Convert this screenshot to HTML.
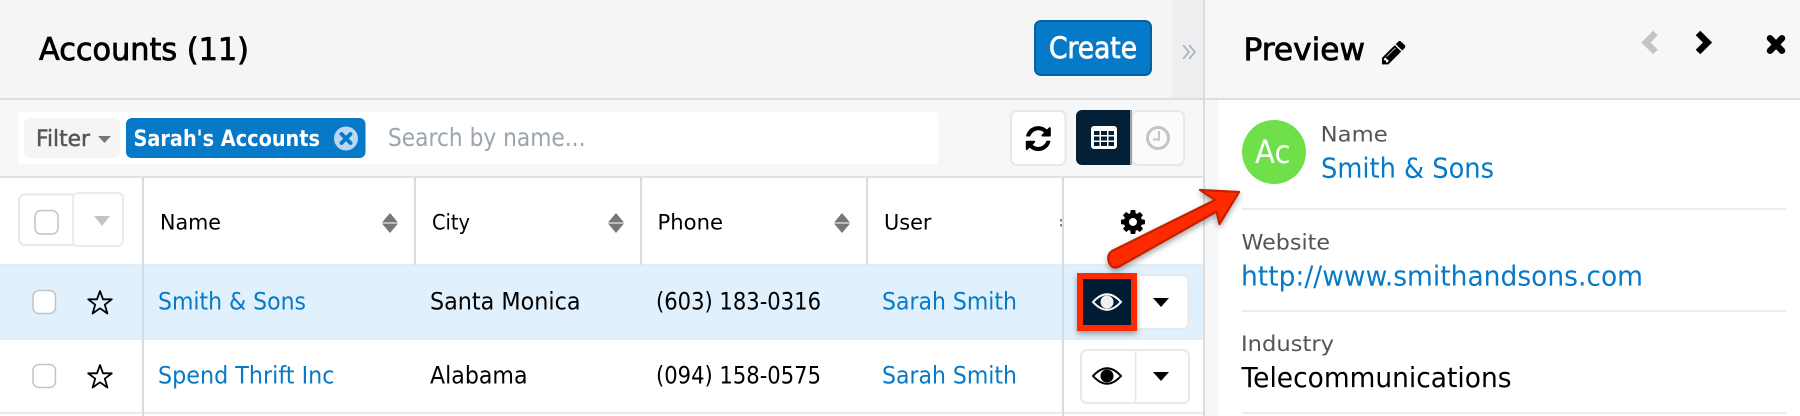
<!DOCTYPE html>
<html><head><meta charset="utf-8"><title>Accounts</title>
<style>
html,body{margin:0;padding:0;background:#fff;width:1800px;height:416px;overflow:hidden}
svg{display:block}
text{font-family:"DejaVu Sans","Liberation Sans",sans-serif;white-space:pre}
.semi{stroke-width:.8px}
</style></head><body>
<svg xmlns="http://www.w3.org/2000/svg" width="1800" height="416" viewBox="0 0 1800 416">
<defs>
<filter id="sh" x="-30%" y="-30%" width="160%" height="170%"><feDropShadow dx="0" dy="3" stdDeviation="3" flood-color="#000" flood-opacity=".35"/></filter>
</defs>
<rect width="1800" height="416" fill="#fff"/>
<!-- main header -->
<rect x="0" y="0" width="1172" height="98" fill="#f5f5f5"/>
<rect x="1172" y="0" width="31" height="98" fill="#eeeff1"/>
<rect x="0" y="98" width="1204" height="2" fill="#dedede"/>
<text x="39" y="60" font-size="31" fill="#000" stroke="#000" class="semi" textLength="210" lengthAdjust="spacingAndGlyphs">Accounts (11)</text>
<rect x="1035" y="21" width="116" height="54" rx="6" fill="#0679c8" stroke="#05609f" stroke-width="2"/>
<text x="1049" y="58" font-size="29" fill="#fff" stroke="#fff" class="semi" textLength="88" lengthAdjust="spacingAndGlyphs">Create</text>
<path d="M1183 45l6 7-6 7M1189 45l6 7-6 7" fill="none" stroke="#aeb5bc" stroke-width="1.800"/>
<!-- filter bar -->
<rect x="0" y="100" width="1203" height="76" fill="#f6f7f9"/>
<rect x="0" y="176" width="1203" height="2" fill="#e0e2e4"/>
<rect x="18" y="112" width="920" height="52" rx="3" fill="#fff"/>
<rect x="24" y="118" width="96" height="40" rx="6" fill="#f5f5f5"/>
<text x="36" y="146" font-size="22.500" fill="#555" stroke="#555" stroke-width=".5" textLength="54" lengthAdjust="spacingAndGlyphs">Filter</text>
<path d="M98 136h13l-6.500 7z" fill="#777"/>
<rect x="126" y="118" width="239.500" height="40" rx="6" fill="#0679c8"/>
<text x="133.500" y="146" font-size="22.500" font-weight="bold" fill="#fff" textLength="186.500" lengthAdjust="spacingAndGlyphs">Sarah's Accounts</text>
<circle cx="346" cy="138.500" r="12" fill="#b9d7f0"/>
<path d="M341.500 134l9 9M350.500 134l-9 9" stroke="#0679c8" stroke-width="3.800" stroke-linecap="round"/>
<text x="388" y="146" font-size="25" fill="#9aa5ae" textLength="197.500" lengthAdjust="spacingAndGlyphs">Search by name...</text>
<!-- refresh -->
<rect x="1011" y="111" width="54.500" height="54" rx="6" fill="#fff" stroke="#e6e8ea" stroke-width="2"/>
<g transform="translate(1023.700,124) scale(.0163)"><path d="M1639 1056q0 5-1 7-64 268-268 434.500t-478 166.500q-146 0-282.500-55t-243.500-157l-129 129q-19 19-45 19t-45-19-19-45v-448q0-26 19-45t45-19h448q26 0 45 19t19 45-19 45l-137 137q71 66 161 102t187 36q134 0 250-65t186-179q11-17 53-117 8-23 30-23h192q13 0 22.500 9.500t9.500 22.500zm25-800v448q0 26-19 45t-45 19h-448q-26 0-45-19t-19-45 19-45l138-138q-148-137-349-137-134 0-250 65t-186 179q-11 17-53 117-8 23-30 23h-199q-13 0-22.500-9.500t-9.500-22.500v-7q65-268 270-434.500t480-166.500q146 0 284 55.500t245 156.500l130-129q19-19 45-19t45 19 19 45z" fill="#000"/></g>
<!-- view toggle -->
<rect x="1132" y="111" width="52" height="54" rx="6" fill="#fbfbfc" stroke="#e6e8ea" stroke-width="2"/>
<path d="M1082 110h48v55h-48a6 6 0 0 1-6-6v-43a6 6 0 0 1 6-6z" fill="#021f36"/>
<rect x="1130" y="110" width="2" height="55" fill="#9aa3ab"/>
<rect x="1091" y="126" width="26" height="23" rx="3" fill="#fff"/>
<path d="M1094 131h5.500v4h-5.500zM1101 131h6v4h-6zM1108.500 131h5.500v4h-5.500zM1094 136.500h5.500v4h-5.500zM1101 136.500h6v4h-6zM1108.500 136.500h5.500v4h-5.500zM1094 142h5.500v4h-5.500zM1101 142h6v4h-6zM1108.500 142h5.500v4h-5.500z" fill="#021f36"/>
<circle cx="1158" cy="138" r="10.500" fill="none" stroke="#c4c4c4" stroke-width="3"/>
<path d="M1159 131v8.500h-6" fill="none" stroke="#c4c4c4" stroke-width="2"/>
<!-- table rows -->
<rect x="0" y="264" width="1203" height="2" fill="#e8ebee"/>
<rect x="0" y="266" width="1203" height="72" fill="#e0f0fd"/>
<rect x="0" y="338" width="1203" height="2" fill="#e8ebee"/>
<rect x="0" y="412" width="1203" height="2" fill="#e8ebee"/>
<!-- column lines -->
<rect x="142" y="178" width="2" height="238" fill="#d6dce2"/>
<rect x="414" y="178" width="2" height="87" fill="#d6dce2"/>
<rect x="640" y="178" width="2" height="87" fill="#d6dce2"/>
<rect x="866" y="178" width="2" height="87" fill="#d6dce2"/>
<rect x="1062" y="178" width="2" height="238" fill="#d6dce2"/>
<!-- header checkbox -->
<path d="M73 194.500H25a6 6 0 0 0-6 6V239a6 6 0 0 0 6 6h48" fill="#fff" stroke="#e8e8e8" stroke-width="2"/>
<rect x="73" y="193" width="50" height="53" rx="5" fill="#fff" stroke="#ebebeb" stroke-width="2"/>
<rect x="35" y="210.500" width="23" height="23.500" rx="6" fill="#fff" stroke="#c4c4c4" stroke-width="1.500"/>
<path d="M94 216h16l-8 10z" fill="#c4c4c4"/>
<!-- header text -->
<text x="160" y="229.500" font-size="21.500" fill="#000" textLength="61" lengthAdjust="spacingAndGlyphs">Name</text>
<text x="432" y="229.500" font-size="21.500" fill="#000" textLength="38" lengthAdjust="spacingAndGlyphs">City</text>
<text x="657.500" y="229.500" font-size="21.500" fill="#000" textLength="65.500" lengthAdjust="spacingAndGlyphs">Phone</text>
<text x="884" y="229.500" font-size="21.500" fill="#000" textLength="47.500" lengthAdjust="spacingAndGlyphs">User</text>
<path d="M390 213l8 9.500h-16zM390 233l8-9.500h-16z" fill="#777"/>
<path d="M616 213l8 9.500h-16zM616 233l8-9.500h-16z" fill="#777"/>
<path d="M842 213l8 9.500h-16zM842 233l8-9.500h-16z" fill="#777"/>
<path d="M1060 219h2v2.500h-2zM1060 224h2v2.500h-2z" fill="#888"/>
<g transform="translate(1119,208) scale(.0156)"><path fill-rule="evenodd" d="M1152 896q0-106-75-181t-181-75-181 75-75 181 75 181 181 75 181-75 75-181zm512-109v222q0 12-8 23t-20 13l-185 28q-19 54-39 91 35 50 107 138 10 12 10 25t-9 23q-27 37-99 108t-94 71q-12 0-26-9l-138-108q-44 23-91 38-16 136-29 186-7 28-36 28h-222q-14 0-24.500-8.500t-11.500-21.500l-28-184q-49-16-90-37l-141 107q-10 9-25 9-14 0-25-11-126-114-165-168-7-10-7-23 0-12 8-23 15-21 51-66.500t54-70.500q-27-50-41-99l-183-27q-13-2-21-12.500t-8-23.500v-222q0-12 8-23t19-13l186-28q14-46 39-92-40-57-107-138-10-12-10-24 0-10 9-23 26-36 98.500-107.500t94.500-71.500q13 0 26 10l138 107q44-23 91-38 16-136 29-186 7-28 36-28h222q14 0 24.500 8.500t11.500 21.500l28 184q49 16 90 37l142-107q9-9 24-9 13 0 25 10 129 119 165 170 7 8 7 22 0 12-8 23-15 21-51 66.500t-54 70.500q26 50 41 98l183 28q13 2 21 12.500t8 23.500z" fill="#000"/></g>
<!-- row 1 -->
<rect x="33" y="290.500" width="22.500" height="23" rx="6" fill="#fff" stroke="#c4c4c4" stroke-width="1.500"/>
<path d="M100 291l3 8.300h8.800l-7 5.400 2.600 8.800-7.400-5.200-7.400 5.200 2.600-8.800-7-5.400h8.800z" fill="none" stroke="#000" stroke-width="1.800" stroke-linejoin="round"/>
<text x="158" y="309.500" font-size="24" fill="#0679c8" textLength="148" lengthAdjust="spacingAndGlyphs">Smith &amp; Sons</text>
<text x="430" y="309.500" font-size="24" fill="#000" textLength="150.500" lengthAdjust="spacingAndGlyphs">Santa Monica</text>
<text x="656" y="309.500" font-size="24" fill="#000" textLength="165" lengthAdjust="spacingAndGlyphs">(603) 183-0316</text>
<text x="882" y="309.500" font-size="24" fill="#0679c8" textLength="135" lengthAdjust="spacingAndGlyphs">Sarah Smith</text>
<rect x="1120" y="275" width="68.500" height="54" rx="6" fill="#fff" stroke="#e8e8e8" stroke-width="2"/>
<rect x="1080" y="276" width="54" height="52" fill="#021f36" stroke="#ff2a00" stroke-width="6" filter="url(#sh)"/>
<path d="M1093 302q14-15.500 28 0q-14 15.500-28 0z" fill="none" stroke="#fff" stroke-width="2"/>
<circle cx="1107" cy="302" r="6.500" fill="#f1f1f1"/>
<path d="M1153 298h16l-8 9z" fill="#000"/>
<!-- row 2 -->
<rect x="33" y="364.500" width="22.500" height="23" rx="6" fill="#fff" stroke="#c4c4c4" stroke-width="1.500"/>
<path d="M100 365l3 8.300h8.800l-7 5.400 2.600 8.800-7.400-5.200-7.400 5.200 2.600-8.800-7-5.400h8.800z" fill="none" stroke="#000" stroke-width="1.800" stroke-linejoin="round"/>
<text x="158" y="383.500" font-size="24" fill="#0679c8" textLength="176.500" lengthAdjust="spacingAndGlyphs">Spend Thrift Inc</text>
<text x="430" y="383.500" font-size="24" fill="#000" textLength="97.500" lengthAdjust="spacingAndGlyphs">Alabama</text>
<text x="656" y="383.500" font-size="24" fill="#000" textLength="165" lengthAdjust="spacingAndGlyphs">(094) 158-0575</text>
<text x="882" y="383.500" font-size="24" fill="#0679c8" textLength="135" lengthAdjust="spacingAndGlyphs">Sarah Smith</text>
<rect x="1081" y="350" width="108" height="53" rx="6" fill="#fff" stroke="#e8e8e8" stroke-width="2"/>
<rect x="1135" y="350" width="1.500" height="53" fill="#e8e8e8"/>
<path d="M1093 376q14-15.500 28 0q-14 15.500-28 0z" fill="none" stroke="#000" stroke-width="2"/>
<circle cx="1107" cy="376" r="6.500" fill="#000"/>
<path d="M1153 372h16l-8 9z" fill="#000"/>
<!-- preview pane -->
<rect x="1204" y="0" width="596" height="416" fill="#fff"/>
<rect x="1204" y="0" width="596" height="98" fill="#f6f7f9"/>
<rect x="1204" y="98" width="596" height="2" fill="#dedede"/>
<rect x="1204" y="100" width="14" height="316" fill="#f6f7f9"/>
<rect x="1203" y="0" width="2" height="416" fill="#dcdcdc"/>
<text x="1243.500" y="60" font-size="31" fill="#000" stroke="#000" class="semi" textLength="121.500" lengthAdjust="spacingAndGlyphs">Preview</text>
<g transform="translate(1380,38.700) scale(.0154)"><path d="M491 1536l91-91-235-235-91 91v107h128v128h107zm523-928q0-22-22-22-10 0-17 7l-542 542q-7 7-7 17 0 22 22 22 10 0 17-7l542-542q7-7 7-17zm-54-192l416 416-832 832h-416v-416zm683 96q0 53-37 90l-166 166-416-416 166-165q36-38 90-38 53 0 91 38l235 234q37 39 37 91z" fill="#000"/></g>
<path d="M1655.500 33l-9.500 9.500 9.500 9.500" fill="none" stroke="#c4c4c4" stroke-width="6.500"/>
<path d="M1698 33l9.500 9.500-9.500 9.500" fill="none" stroke="#000" stroke-width="6.500"/>
<path d="M1770 38.300l12 12.400M1782 38.300l-12 12.400" fill="none" stroke="#000" stroke-width="6.500" stroke-linecap="round"/>
<circle cx="1274" cy="152" r="32" fill="#6fe04a"/>
<text x="1255" y="163" font-size="32" fill="#fff" textLength="35.500" lengthAdjust="spacingAndGlyphs">Ac</text>
<text x="1320.700" y="141.500" font-size="21.500" fill="#555" textLength="67" lengthAdjust="spacingAndGlyphs">Name</text>
<text x="1321" y="177.500" font-size="28" fill="#0679c8" textLength="173" lengthAdjust="spacingAndGlyphs">Smith &amp; Sons</text>
<rect x="1242" y="208" width="544" height="2" fill="#ececec"/>
<text x="1241.500" y="249.500" font-size="21.500" fill="#555" textLength="88.500" lengthAdjust="spacingAndGlyphs">Website</text>
<text x="1241" y="285.500" font-size="28" fill="#0679c8" textLength="402" lengthAdjust="spacingAndGlyphs">http://www.smithandsons.com</text>
<rect x="1242" y="310" width="544" height="2" fill="#ececec"/>
<text x="1241" y="351" font-size="21.500" fill="#555" textLength="93" lengthAdjust="spacingAndGlyphs">Industry</text>
<text x="1241.500" y="387" font-size="28" fill="#000" textLength="270" lengthAdjust="spacingAndGlyphs">Telecommunications</text>
<rect x="1242" y="412" width="544" height="2" fill="#ececec"/>
<!-- arrow -->
<path d="M1112 251L1215 200L1200 190L1239 192L1219.500 224L1216.500 211.500L1120 266Q1113 270 1109.500 263.500Q1106 255.500 1112 251Z" fill="#ff2a00" stroke="#c22100" stroke-width="2.200" stroke-linejoin="round" filter="url(#sh)"/>
</svg>
</body></html>
